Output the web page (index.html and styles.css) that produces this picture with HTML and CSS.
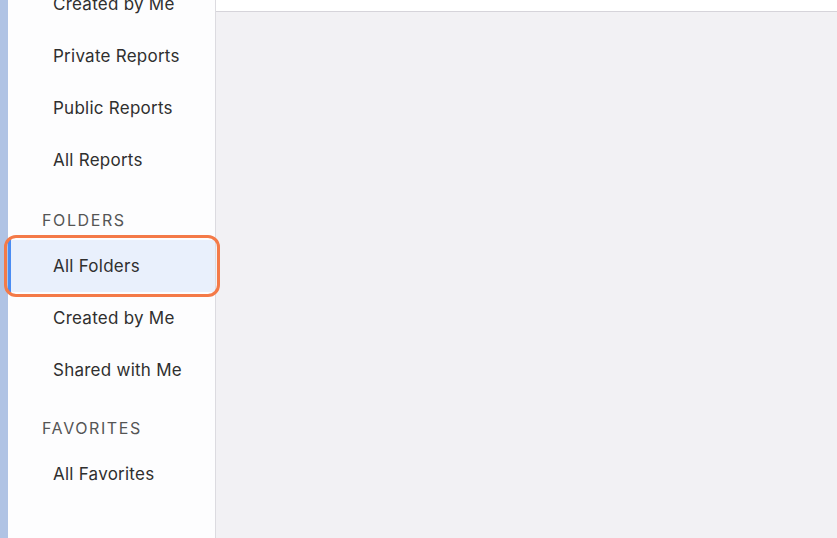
FILE: index.html
```html
<!DOCTYPE html>
<html lang="en">
<head>
    <meta charset="UTF-8">
    <meta name="viewport" content="width=device-width, initial-scale=1.0">
    <title>Reports</title>
    <link rel="stylesheet" href="styles.css">
</head>
<body>
    <div class="app">
        <div class="edge"></div>
        <aside class="sidebar">
            <nav class="nav">
                <a class="nav-item">Created by Me</a>
                <a class="nav-item">Private Reports</a>
                <a class="nav-item">Public Reports</a>
                <a class="nav-item">All Reports</a>

                <h2 class="nav-title">Folders</h2>
                <a class="nav-item active">All Folders</a>
                <a class="nav-item">Created by Me</a>
                <a class="nav-item">Shared with Me</a>

                <h2 class="nav-title second">Favorites</h2>
                <a class="nav-item">All Favorites</a>
            </nav>
        </aside>
        <main class="main">
            <div class="topbar"></div>
            <div class="content"></div>
        </main>
    </div>
</body>
</html>
```

FILE: styles.css
```css
body {
    margin: 0;
    font-family: Inter, "Noto Sans", sans-serif;
    color: #2f2f2f;
    height: 100vh;
    overflow: hidden;
}

.app {
    display: flex;
    height: 100%;
}

.edge {
    width: 8px;
    background: #b0c3e4;
}

.sidebar {
    width: 207px;
    background: #fdfdfe;
    border-right: 1px solid #dcdbe0;
}

/* list is scrolled a little, first row is cut off at the top */
.nav {
    display: flex;
    flex-direction: column;
    margin-top: -22px;
}

.nav-item {
    position: relative;
    display: flex;
    align-items: center;
    height: 52px;
    padding-left: 45px;
    font-size: 17px;
    letter-spacing: 0.25px;
}

.nav-item.active {
    background: #e9f0fc;
    box-shadow: inset 3px 0 0 #4a8cf3;
}

/* orange callout drawn round the selected row */
.nav-item.active::after {
    content: "";
    position: absolute;
    z-index: 2;
    top: -5px;
    bottom: -5px;
    left: -4px;
    right: -5px;
    border: 3px solid #f47a48;
    border-radius: 12px;
}

.nav-title {
    margin: 24px 0 10px;
    padding-left: 34px;
    font-size: 16px;
    font-weight: 400;
    line-height: 20px;
    letter-spacing: 1.6px;
    text-transform: uppercase;
    color: #555;
}

.nav-title.second {
    margin-top: 22px;
}

.main {
    flex: 1;
    display: flex;
    flex-direction: column;
    background: #f2f1f4;
}

.topbar {
    height: 11px;
    background: #fff;
    border-bottom: 1px solid #d6d4da;
}

.content {
    flex: 1;
}
```
